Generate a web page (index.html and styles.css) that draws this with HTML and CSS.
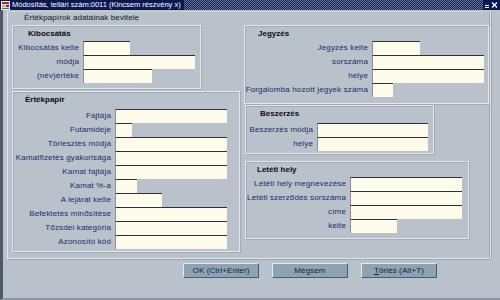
FILE: index.html
```html
<!DOCTYPE html>
<html lang="hu">
<head>
<meta charset="utf-8">
<title>Értékpapírok adatainak bevitele</title>
<link rel="stylesheet" href="styles.css">
</head>
<body>
<div class="win">
  <div class="titlebar">
    <span class="ticon">
      <svg width="9" height="9" viewBox="0 0 9 9">
        <rect x="0.5" y="0.5" width="8" height="8" fill="#d8d8d8" stroke="#f4f4f4"/>
        <rect x="1" y="1" width="7" height="2" fill="#c02020"/>
        <rect x="1" y="4" width="3" height="2" fill="#e8c020"/>
        <rect x="5" y="4" width="3" height="2" fill="#2040a0"/>
        <rect x="1" y="7" width="7" height="1" fill="#606060"/>
      </svg>
    </span>
    <span class="ttext">Módosítás, tellári szám:0011 (Kincsem részvény x)</span>
    <span class="tfill"></span>
    <span class="tctrl">
      <svg width="14" height="8" viewBox="0 0 14 8">
        <path d="M1 6.5h4M1 4.5h4" stroke="#fff" stroke-width="1"/>
        <path d="M8 1.5l5 5M13 1.5l-5 5" stroke="#fff" stroke-width="1.2"/>
      </svg>
    </span>
  </div>
  <div class="content">
    <div class="frame">
      <div class="caption">Értékpapírok adatainak bevitele</div>
      <div class="cols">
        <div class="col">
          <section class="grp grp-kib">
            <h3 class="gtitle">Kibocsátás</h3>
            <div class="rows">
              <span class="lbl">Kibocsátás kelte</span><span class="fld w47"></span>
              <span class="lbl">módja</span><span class="fld w112"></span>
              <span class="lbl">(név)értéke</span><span class="fld w69"></span>
            </div>
          </section>
          <section class="grp grp-ert">
            <h3 class="gtitle">Értékpapír</h3>
            <div class="rows">
              <span class="lbl">Fajtája</span><span class="fld w112"></span>
              <span class="lbl">Futamideje</span><span class="fld w17"></span>
              <span class="lbl">Törlesztés módja</span><span class="fld w112"></span>
              <span class="lbl">Kamatfizetés gyakorisága</span><span class="fld w112"></span>
              <span class="lbl">Kamat fajtája</span><span class="fld w112"></span>
              <span class="lbl">Kamat %-a</span><span class="fld w22"></span>
              <span class="lbl">A lejárat kelte</span><span class="fld w47"></span>
              <span class="lbl">Befektetés minősítése</span><span class="fld w112"></span>
              <span class="lbl">Tőzsdei kategória</span><span class="fld w112"></span>
              <span class="lbl">Azonosító kód</span><span class="fld w112"></span>
            </div>
          </section>
        </div>
        <div class="col">
          <section class="grp grp-jeg">
            <h3 class="gtitle">Jegyzés</h3>
            <div class="rows">
              <span class="lbl">Jegyzés kelte</span><span class="fld w48"></span>
              <span class="lbl">sorszáma</span><span class="fld w112"></span>
              <span class="lbl">helye</span><span class="fld w112"></span>
              <span class="lbl">Forgalomba hozott jegyek száma</span><span class="fld w21"></span>
            </div>
          </section>
          <section class="grp grp-bes">
            <h3 class="gtitle">Beszerzés</h3>
            <div class="rows">
              <span class="lbl">Beszerzés módja</span><span class="fld w111"></span>
              <span class="lbl">helye</span><span class="fld w111"></span>
            </div>
          </section>
          <section class="grp grp-let">
            <h3 class="gtitle">Letéti hely</h3>
            <div class="rows">
              <span class="lbl">Letéti hely megnevezése</span><span class="fld w112"></span>
              <span class="lbl">Letéti szerződés sorszáma</span><span class="fld w112"></span>
              <span class="lbl">címe</span><span class="fld w112"></span>
              <span class="lbl">kelte</span><span class="fld w47"></span>
            </div>
          </section>
        </div>
      </div>
    </div>
    <div class="buttons">
      <button class="btn">OK (Ctrl+Enter)</button>
      <button class="btn">Mégsem</button>
      <button class="btn"><u>T</u>örlés (Alt+T)</button>
    </div>
  </div>
</div>
</body>
</html>
```
FILE: styles.css
```css
* { box-sizing: border-box; margin: 0; padding: 0; }

body {
  margin: 0;
  width: 500px;
  height: 300px;
  overflow: hidden;
  background: #b9c1cb;
  font-family: "Liberation Sans", Arial, sans-serif;
  font-size: 8px;
}

.win {
  width: 500px;
  height: 300px;
  display: flex;
  flex-direction: column;
  background: #b9c1cb;
}

/* title bar */
.titlebar {
  height: 10px;
  display: flex;
  align-items: stretch;
  background: repeating-conic-gradient(#0f1c55 0 25%, #6f7a96 0 50%) 0 0 / 2px 2px;
}
.ticon {
  width: 11px;
  display: flex;
  align-items: center;
  justify-content: center;
  background: #0b1850;
}
.ttext {
  background: #0b1850;
  color: #ffffff;
  font-size: 7.5px;
  line-height: 10px;
  padding: 0 3px 0 1px;
  white-space: nowrap;
}
.tfill { flex: 1; }
.tctrl {
  display: flex;
  align-items: center;
  padding: 0 2px 0 1px;
  background: #0b1850;
}

/* body of the window */
.content {
  flex: 1;
  border-left: 3px solid #505969;
  border-bottom: 2px solid #8b939e;
}

.frame {
  margin: 1px 0 0 4px;
  width: 484px;
  height: 248px;
  border: 1px solid #e2e6eb;
  border-top-color: #c9cfd6;
  box-shadow: inset -1px 0 0 #9aa3ae, 1px 1px 0 #9aa3ae;
}

.caption {
  height: 10px;
  line-height: 10px;
  margin: 1px 0 0 16px;
  color: #0e1526;
  font-size: 8px;
  letter-spacing: 0.1px;
}

.cols {
  display: grid;
  grid-template-columns: 228px 245px;
  column-gap: 4px;
  margin: 2px 0 0 4px;
}

.col {
  display: flex;
  flex-direction: column;
  align-items: flex-start;
}

/* group boxes */
.grp {
  border: 1px solid #e4e8ed;
  box-shadow: inset 1px 1px 0 #a2aab5, 1px 1px 0 #a2aab5;
  padding: 2px 4px 0 4px;
}
.gtitle {
  height: 12px;
  line-height: 12px;
  font-size: 8px;
  font-weight: bold;
  color: #0a0c16;
  padding-left: 9px;
}

.rows {
  display: grid;
  grid-template-columns: var(--lw) max-content;
  column-gap: 4px;
  grid-auto-rows: 14px;
  margin-top: 1px;
}

.lbl {
  justify-self: end;
  align-self: center;
  white-space: nowrap;
  color: #1d2a6c;
  line-height: 14px;
  letter-spacing: 0.15px;
}

.fld {
  height: 14px;
  background: #fffbea;
  border-top: 1px solid #2c3140;
  border-left: 1px solid #8a909a;
}
.w17 { width: 17px; }
.w21 { width: 21px; }
.w22 { width: 22px; }
.w47 { width: 47px; }
.w48 { width: 48px; }
.w69 { width: 69px; }
.w111 { width: 111px; }
.w112 { width: 112px; }

.grp-kib { width: 189px; height: 64px; --lw: 62px; }
.grp-kib .gtitle { padding-left: 11px; }
.grp-ert { width: 228px; height: 161px; margin-top: 2px; --lw: 94px; }
.grp-ert .gtitle { padding-left: 8px; }
.grp-ert .rows { margin-top: 3px; }
.grp-jeg { width: 245px; height: 79px; --lw: 119px; }
.grp-bes { width: 189px; height: 49px; margin: 1px 0 0 1px; --lw: 63px; }
.grp-bes .gtitle { padding-left: 10px; }
.grp-bes .rows { margin-top: 3px; }
.grp-let { width: 224px; height: 78px; margin: 7px 0 0 1px; --lw: 96px; }
.grp-let .gtitle { padding-left: 7px; }

/* buttons */
.buttons {
  display: flex;
  gap: 13px;
  margin-top: 4px;
  padding-left: 180px;
}
.btn {
  width: 76px;
  height: 15px;
  background: #8ca3b5;
  border: 1px solid;
  border-color: #e3eaf0 #4d5a68 #4d5a68 #e3eaf0;
  font-family: "Liberation Sans", Arial, sans-serif;
  font-size: 8px;
  color: #16203a;
  line-height: 13px;
  text-align: center;
  letter-spacing: 0.1px;
}
.btn u { text-decoration: underline; }
```
